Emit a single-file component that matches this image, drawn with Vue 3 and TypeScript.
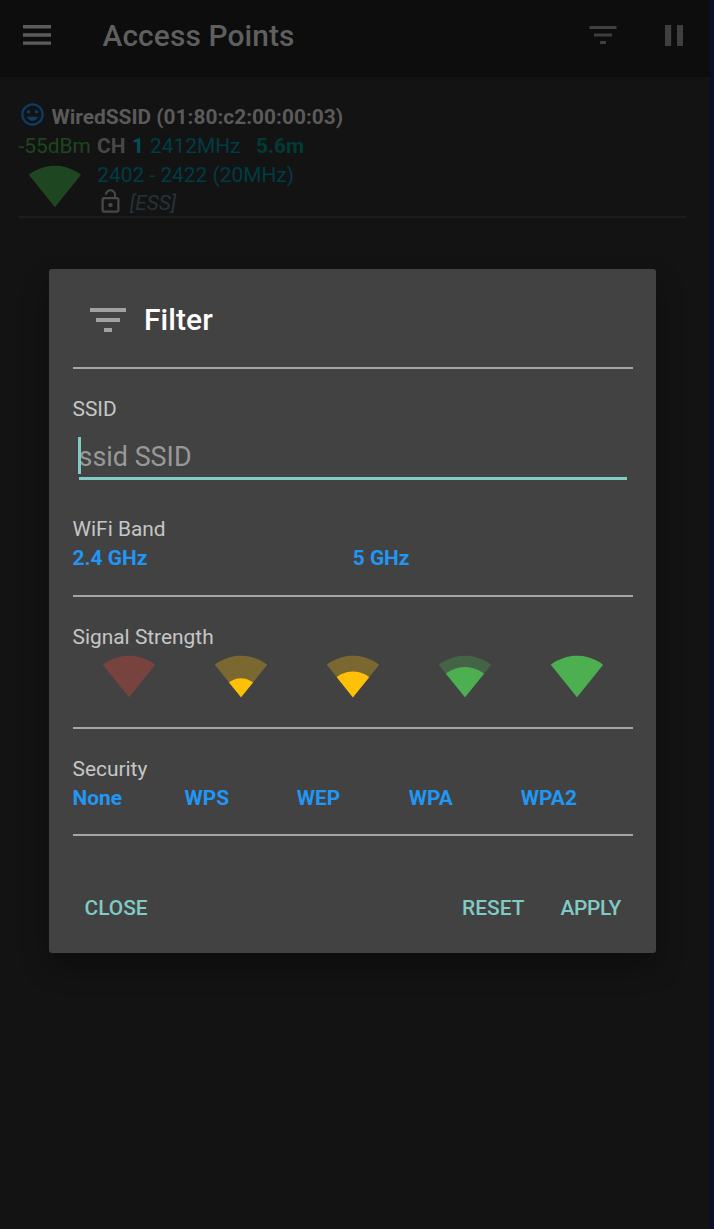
<script setup lang="ts">
interface Signal {
  color: string
  base: number
  level: string
}

const filterPath = 'M10 18h4v-2h-4v2zM3 6v2h18V6H3zm3 7h12v-2H6v2z'
const wedge = 'M12.01 21.49L23.64 7c-.45-.34-4.93-4-11.64-4C5.28 3 .81 6.66.36 7l11.63 14.49.01.01.01-.01z'
const oneBar = 'M6.67 14.86L12 21.49v.01l.01-.01 5.33-6.63C17.06 14.65 15.03 13 12 13s-5.06 1.65-5.33 1.86z'
const twoBars = 'M4.79 12.52l7.2 8.98H12l.01-.01 7.2-8.98C18.85 12.24 16.1 10 12 10s-6.85 2.24-7.21 2.52z'
const threeBars = 'M3.53 10.95l8.46 10.54.01.01.01-.01 8.46-10.54C20.04 10.62 16.81 8 12 8c-4.81 0-8.04 2.62-8.47 2.95z'

const signals: Signal[] = [
  { color: '#f44336', base: 0.3, level: '' },
  { color: '#ffc107', base: 0.3, level: oneBar },
  { color: '#ffc107', base: 0.3, level: twoBars },
  { color: '#4caf50', base: 0.3, level: threeBars },
  { color: '#4caf50', base: 1, level: '' },
]
const bands: string[] = ['2.4 GHz', '5 GHz']
const securities: string[] = ['None', 'WPS', 'WEP', 'WPA', 'WPA2']
</script>

<template>
  <div class="screen">
    <header class="toolbar">
      <svg class="menu" viewBox="0 0 28 20"><path d="M0 0h28v3.4H0zM0 8.3h28v3.4H0zM0 16.4h28v3.4H0z" /></svg>
      <h1>Access Points</h1>
      <svg class="tool-filter" viewBox="0 0 24 24"><path :d="filterPath" /></svg>
      <svg class="pause" viewBox="0 0 18 21"><path d="M0 0h6.2v21H0zM12 0h6.2v21H12z" /></svg>
    </header>

    <section class="access-point">
      <div class="line name">
        <svg class="face" viewBox="0 0 24 24"><path d="M11.99 2C6.47 2 2 6.48 2 12s4.47 10 9.99 10C17.52 22 22 17.52 22 12S17.52 2 11.99 2zM12 20c-4.42 0-8-3.58-8-8s3.58-8 8-8 8 3.58 8 8-3.58 8-8 8zm3.5-9c.83 0 1.5-.67 1.5-1.5S16.33 8 15.5 8 14 8.67 14 9.5s.67 1.5 1.5 1.5zm-7 0c.83 0 1.5-.67 1.5-1.5S9.33 8 8.5 8 7 8.67 7 9.5 7.67 11 8.5 11zm3.5 6.5c2.33 0 4.31-1.46 5.11-3.5H6.89c.8 2.04 2.78 3.5 5.11 3.5z" /></svg>
        <b>WiredSSID (01:80:c2:00:00:03)</b>
      </div>
      <div class="line stats">
        <span class="dbm">-55dBm</span>
        <b class="ch">CH</b>
        <b class="channel">1</b>
        <span class="freq">2412MHz</span>
        <b class="distance">5.6m</b>
      </div>
      <div class="details">
        <svg class="strength" viewBox="0 0 24 24"><path :d="wedge" /></svg>
        <div>
          <div class="line freq">2402 - 2422 (20MHz)</div>
          <div class="line caps">
            <svg class="lock" viewBox="0 0 24 24"><path d="M12 17c1.1 0 2-.9 2-2s-.9-2-2-2-2 .9-2 2 .9 2 2 2zm6-9h-1V6c0-2.76-2.24-5-5-5S7 3.24 7 6h1.9c0-1.71 1.39-3.1 3.1-3.1 1.71 0 3.1 1.39 3.1 3.1v2H6c-1.1 0-2 .9-2 2v10c0 1.1.9 2 2 2h12c1.1 0 2-.9 2-2V10c0-1.1-.9-2-2-2zm0 12H6V10h12v10z" /></svg>
            <i>[ESS]</i>
          </div>
        </div>
      </div>
    </section>

    <main class="dialog">
      <div class="title">
        <svg viewBox="0 0 24 24"><path :d="filterPath" /></svg>
        <h2>Filter</h2>
      </div>
      <section class="group ssid">
        <div class="label">SSID</div>
        <div class="field"><span class="caret"></span>ssid SSID</div>
      </section>
      <section class="group band">
        <div class="label">WiFi Band</div>
        <div class="options"><b v-for="b in bands" :key="b">{{ b }}</b></div>
      </section>
      <section class="group signal">
        <div class="label">Signal Strength</div>
        <div class="signals">
          <svg v-for="(s, i) in signals" :key="i" viewBox="0 0 24 24" :fill="s.color">
            <path :d="wedge" :fill-opacity="s.base" />
            <path v-if="s.level" :d="s.level" />
          </svg>
        </div>
      </section>
      <section class="group security">
        <div class="label">Security</div>
        <div class="options"><b v-for="s in securities" :key="s">{{ s }}</b></div>
      </section>
      <footer class="actions">
        <span class="close">CLOSE</span>
        <span>RESET</span>
        <span class="apply">APPLY</span>
      </footer>
    </main>
  </div>
</template>

<style>
body {
  background: #131313;
  overflow: hidden;
}
</style>

<style scoped>
.screen {
  position: relative;
  box-sizing: border-box;
  width: 714px;
  height: 1229px;
  border-right: 4px solid #0c0c30;
  background: #131313;
  font: 20.9px/29px Roboto, sans-serif;
}
svg {
  display: block;
  flex: none;
}
h1,
h2 {
  margin: 0;
  font-size: 29.9px;
  font-weight: 500;
}
.toolbar {
  display: flex;
  align-items: flex-start;
  box-sizing: border-box;
  height: 77px;
  padding-left: 23px;
  background: #0d0d0d;
  fill: #3f3f3f;
}
.menu {
  width: 28px;
  height: 20px;
  margin-top: 25px;
  fill: #5c5c5c;
}
h1 {
  margin: 16px 0 0 51.5px;
  width: 482.5px;
  letter-spacing: 0.1px;
  line-height: 40px;
  color: #5f5f5f;
}
.tool-filter {
  width: 36px;
  height: 36px;
  margin-top: 17px;
}
.pause {
  width: 18px;
  height: 21px;
  margin: 25px 0 0 44px;
}
.access-point {
  box-sizing: border-box;
  width: 667px;
  height: 116px;
  margin: 25px 0 0 19px;
  padding-top: 1px;
  border-bottom: 2px solid #1d1d1d;
}
.line {
  display: flex;
  height: 28.8px;
  white-space: pre;
}
.name {
  color: #5a5a5a;
}
.face {
  width: 27px;
  height: 27px;
  margin: -2px 5.4px 0 0;
  fill: #0d3d66;
}
.dbm {
  width: 78.5px;
  margin-left: -0.5px;
  color: #1e4620;
}
.ch {
  width: 35px;
  color: #484848;
}
.channel {
  width: 18px;
  color: #00505a;
}
.freq {
  color: #003c43;
}
.stats .freq {
  width: 106px;
}
.distance {
  color: #003c36;
}
.details {
  display: flex;
}
.strength {
  width: 53.8px;
  height: 53.8px;
  margin: -2px 15.4px 0 8.6px;
  fill: #1e4620;
}
.details .freq {
  padding-left: 0.5px;
}
.lock {
  width: 27px;
  height: 27px;
  margin: -1.2px 6px 0 0;
  fill: #484848;
}
.caps {
  color: #263238;
}
.dialog {
  position: absolute;
  left: 48.5px;
  top: 269px;
  box-sizing: border-box;
  width: 607.9px;
  height: 683.5px;
  padding: 0 23.5px 0 24px;
  border-radius: 3px;
  background: #424242;
  box-shadow: 0 14px 28px rgba(0, 0, 0, 0.3);
  color: #c6c6c6;
}
.title {
  display: flex;
  box-sizing: border-box;
  height: 100px;
  padding: 26.5px 0 0 11.5px;
  border-bottom: 2px solid #a5a5a5;
}
.title svg {
  width: 48px;
  height: 48px;
  fill: #a1a1a1;
}
h2 {
  margin-top: -0.5px;
  padding-left: 12px;
  letter-spacing: 0.1px;
  line-height: 50px;
  color: #fff;
}
.group {
  box-sizing: border-box;
}
.ssid {
  height: 121px;
  padding-top: 26px;
}
.field {
  position: relative;
  box-sizing: border-box;
  height: 45px;
  margin: 11px 6px 0;
  padding-top: 4px;
  border-bottom: 3px solid #80cbc4;
  font-size: 26.9px;
  line-height: 36px;
  color: #989898;
}
.caret {
  position: absolute;
  left: -0.3px;
  top: 2px;
  width: 3px;
  height: 37px;
  background: #80cbc4;
}
.band {
  height: 107px;
  padding-top: 25px;
  border-bottom: 2px solid #a5a5a5;
}
.signal {
  height: 132px;
  padding-top: 26px;
  border-bottom: 2px solid #a5a5a5;
}
.security {
  height: 107px;
  padding-top: 26px;
  border-bottom: 2px solid #a5a5a5;
}
.options {
  display: flex;
  color: #2196f3;
}
.options b {
  flex: 1;
}
.signals {
  display: flex;
  margin: -3px 0 0 29.5px;
  gap: 58px;
}
.signals svg {
  width: 54px;
  height: 54px;
}
.actions {
  display: flex;
  gap: 36px;
  padding: 58px 12px 0;
  font-weight: 500;
  color: #80cbc4;
}
.close {
  margin-right: auto;
}
.apply {
  letter-spacing: -0.3px;
}
</style>
